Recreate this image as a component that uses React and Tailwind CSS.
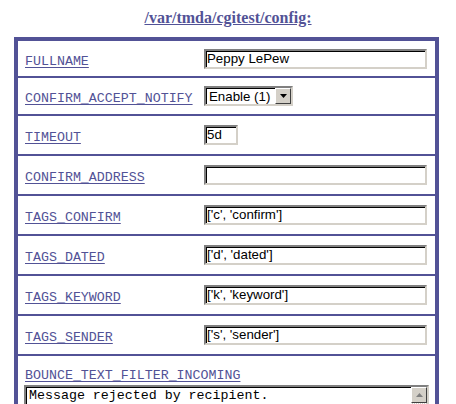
const rows = [
  { name: "FULLNAME", value: "Peppy LePew", h: "h-[37px]" },
  { name: "CONFIRM_ACCEPT_NOTIFY", select: "Enable (1)", h: "h-[38px]" },
  { name: "TIMEOUT", value: "5d", short: true, h: "h-[40px]" },
  { name: "CONFIRM_ADDRESS", value: "", h: "h-[40px]" },
  { name: "TAGS_CONFIRM", value: "['c', 'confirm']", h: "h-[40px]" },
  { name: "TAGS_DATED", value: "['d', 'dated']", h: "h-[40px]" },
  { name: "TAGS_KEYWORD", value: "['k', 'keyword']", h: "h-[40px]" },
  { name: "TAGS_SENDER", value: "['s', 'sender']", h: "h-[40px]" },
]

function Label({ children }) {
  return (
    <a
      href="#"
      className="text-[13.3px] leading-none text-[#525296] underline underline-offset-2 [font-family:'Liberation_Mono',monospace]"
    >
      {children}
    </a>
  )
}

function Field({ value, short }) {
  return (
    <div
      className={`${short ? "w-[34px]" : "w-[223px]"} h-[20px] bg-white border-2 border-t-[#808080] border-l-[#808080] border-r-[#d4d0c8] border-b-[#d4d0c8] shadow-[inset_1px_1px_0_#000] flex items-center pl-[1px] text-[13.3px] text-black [font-family:'Liberation_Sans',Arial,sans-serif] whitespace-nowrap overflow-hidden`}
    >
      {value}
    </div>
  )
}

function Select({ value }) {
  return (
    <div className="w-[89px] h-[20px] bg-white border-2 border-t-[#808080] border-l-[#808080] border-r-[#d4d0c8] border-b-[#d4d0c8] shadow-[inset_1px_1px_0_#000] flex items-center text-[13.3px] text-black [font-family:'Liberation_Sans',Arial,sans-serif]">
      <span className="flex-1 pl-[3px] pt-[1px]">{value}</span>
      <span className="w-[16px] h-[16px] bg-[#d4d0c8] border border-t-[#fff] border-l-[#fff] border-r-[#404040] border-b-[#404040] flex items-center justify-center">
        <svg width="7" height="4" viewBox="0 0 7 4">
          <path d="M0 0h7L3.5 4z" fill="#000" />
        </svg>
      </span>
    </div>
  )
}

export default function App() {
  return (
    <div className="w-[456px] h-[404px] overflow-hidden bg-white">
      <div className="h-[37px] pt-[5px] text-center">
        <a
          href="#"
          className="text-[16px] font-bold text-[#525296] underline [font-family:'Liberation_Serif','Times_New_Roman',serif]"
        >
          /var/tmda/cgitest/config:
        </a>
      </div>
      <div className="ml-[14px] w-[425px] border-4 border-b-0 border-[#525296] flex flex-col divide-y-2 divide-[#525296]">
        {rows.map((r) => (
          <div key={r.name} className={`${r.h} flex items-center`}>
            <div className="w-[186px] pl-[7px]">
              <Label>{r.name}</Label>
            </div>
            {r.select ? <Select value={r.select} /> : <Field value={r.value} short={r.short} />}
          </div>
        ))}
        <div className="pt-[10px] pl-[6px] pr-[6px] h-[60px]">
          <div className="pl-[1px] h-[14px] leading-[14px]">
            <Label>BOUNCE_TEXT_FILTER_INCOMING</Label>
          </div>
          <div className="mt-[5px] w-[405px] h-[40px] bg-white border-2 border-t-[#808080] border-l-[#808080] border-r-[#d4d0c8] border-b-[#d4d0c8] shadow-[inset_1px_1px_0_#000] flex">
            <div className="flex-1 pl-[3px] pt-[1px] text-[13.3px] leading-[16px] text-black [font-family:'Liberation_Mono',monospace]">
              Message rejected by recipient.
            </div>
            <div className="w-[16px] flex flex-col">
              <span className="w-[16px] h-[16px] bg-[#d4d0c8] border border-t-[#fff] border-l-[#fff] border-r-[#404040] border-b-[#404040] flex items-center justify-center">
                <svg width="7" height="4" viewBox="0 0 7 4">
                  <path d="M0 4h7L3.5 0z" fill="#808080" />
                </svg>
              </span>
              <span className="flex-1 bg-[repeating-conic-gradient(#d4d0c8_0_25%,#fff_0_50%)] bg-[length:2px_2px]" />
            </div>
          </div>
        </div>
      </div>
    </div>
  )
}
